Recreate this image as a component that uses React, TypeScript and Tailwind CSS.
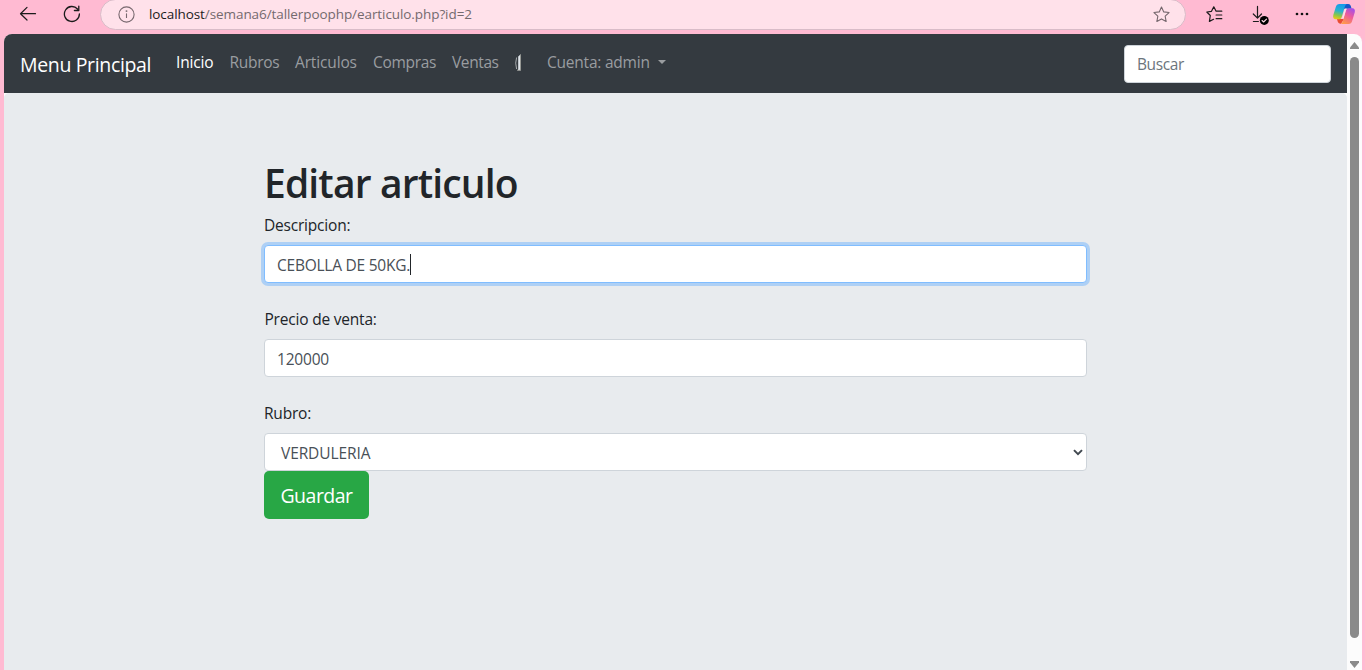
import React from 'react';

const navLinks = [
  { label: 'Rubros', cls: 'w-[65.5px] tracking-[-0.28px]' },
  { label: 'Articulos', cls: 'w-[78px] tracking-[-0.14px]' },
  { label: 'Compras', cls: 'w-[79px] tracking-[-0.32px]' },
  { label: 'Ventas', cls: 'w-[63px] tracking-[-0.4px]' },
];

function BrowserBar() {
  return (
    <header className="flex h-[34px] shrink-0 items-start bg-[#ffbad2] text-[#1b1b1b]">
      <svg className="ml-[19px] mt-[5px] h-[18px] w-[18px]" viewBox="0 0 18 18" fill="none" stroke="currentColor" strokeWidth="1.2" strokeLinecap="round" strokeLinejoin="round">
        <path d="M16.5 8.7H1.7M8 2.4 1.5 8.7 8 15" />
      </svg>
      <svg className="ml-[26px] mt-[5px] h-[18px] w-[18px]" viewBox="0 0 18 18" fill="none" stroke="currentColor" strokeWidth="1.3" strokeLinecap="round" strokeLinejoin="round">
        <path d="M16.4 9a7.5 7.5 0 1 1-1.9-5M15.8 1.2v4.3h-4.4" />
      </svg>
      <div className="-mt-px ml-[19px] flex h-[31px] w-[1086px] items-center rounded-full border border-[#d9bcc8] bg-[#ffe1ea]">
        <svg className="-mt-px ml-[16.5px] h-[17px] w-[17px] text-[#77686e]" viewBox="0 0 17 17" fill="none" stroke="currentColor" strokeWidth="1.1">
          <circle cx="8.5" cy="8.5" r="7.6" />
          <path d="M8.5 7.4v4.6" />
          <circle cx="8.5" cy="5.1" r=".4" />
        </svg>
        <div className="ml-[14.5px] whitespace-nowrap font-['Open_Sans'] text-[13.5px] tracking-[-0.08px] text-[#746a6e]">
          <span className="text-[#1b1b1b]">localhost</span>/semana6/tallerpoophp/earticulo.php?id=2
        </div>
        <svg className="ml-auto mr-[15px] h-[17px] w-[17px] text-[#75676d]" viewBox="0 0 17 17" fill="none" stroke="currentColor" strokeWidth="1.1" strokeLinejoin="round">
          <path d="m8.5 1 2.25 4.9 5.3.65-3.9 3.65 1 5.3-4.65-2.6-4.65 2.6 1-5.3L.95 6.55l5.3-.65Z" />
        </svg>
      </div>
      <svg className="ml-[20px] mt-[6px] h-[17px] w-[17px]" viewBox="0 0 17 17" fill="none" stroke="currentColor" strokeWidth="1.2" strokeLinecap="round" strokeLinejoin="round">
        <path d="M10.1 5.2 7.8.8 5.5 5.3.8 6l3.5 3.5-.9 5.9 4.2-2.1M10.1 5.2h5.7M10.1 9h5.7M10.1 12.7h5.7" />
      </svg>
      <svg className="ml-[29px] mt-[5px] h-5 w-[18px]" viewBox="0 0 18 20" fill="none" stroke="currentColor" strokeWidth="1.2" strokeLinecap="round" strokeLinejoin="round">
        <path d="M5.5 1.4v11.4M1.3 9l4.2 4.2L9.5 9M1.4 16.5h5" />
        <circle cx="12.3" cy="15.4" r="4.5" fill="#000" stroke="none" />
        <path d="m10.1 15.5 1.5 1.5 2.9-2.9" stroke="#ffdce7" strokeWidth="1.1" />
      </svg>
      <svg className="ml-[24px] mt-[12px] h-1 w-4" viewBox="0 0 16 4" fill="#111">
        <circle cx="3" cy="2" r="1.35" /><circle cx="8" cy="2" r="1.35" /><circle cx="13" cy="2" r="1.35" />
      </svg>
      <svg className="ml-[22px] mt-[3px] h-[22px] w-6" viewBox="0 0 24 22">
        <defs>
          <linearGradient id="cool" x1=".4" y1="0" x2=".2" y2="1">
            <stop stopColor="#169bea" /><stop offset=".42" stopColor="#29b3cf" /><stop offset=".72" stopColor="#8ac64b" /><stop offset="1" stopColor="#f3ca13" />
          </linearGradient>
          <linearGradient id="warm" x1=".8" y1="0" x2=".25" y2="1">
            <stop stopColor="#a34eea" /><stop offset=".45" stopColor="#ee5a9c" /><stop offset="1" stopColor="#ff9b48" />
          </linearGradient>
        </defs>
        <path d="M11 1h5.3c1.3 0 2 .7 2.5 2l.8 2.8h-8Z" fill="#1857c8" />
        <path d="M5 16h7l-3 4.8c-1.9.2-2.9-.9-3.3-2.2Z" fill="#e94c32" />
        <path d="M7.5 1h7.2c-1.3.8-1.7 2-2.2 3.7l-2.6 8.7c-.6 2-1.3 2.9-3.6 2.9H4c-2.3 0-3.4-1.7-2.7-4.3L3.8 4.1C4.4 2 5.4 1 7.5 1Z" fill="url(#cool)" />
        <path d="M16.5 20.9H8.7c1.2-.7 1.8-1.7 2.3-3.5l2.7-9.1c.6-2 1.5-3 3.8-3h2.8c2.1 0 3.1 1.7 2.4 4.1l-2.5 8.4c-.7 2.2-1.6 3.1-3.7 3.1Z" fill="url(#warm)" />
        <path d="m12.7 6.3-2.6 9.2h1.4l2.4-8.2c.2-.7.5-1.3.9-1.7h-1.2c-.4 0-.7.2-.9.7Z" fill="#ffe1ea" />
      </svg>
    </header>
  );
}

function NavBar() {
  return (
    <nav className="flex h-[59px] shrink-0 items-start bg-[#343a40] pl-4 pr-4">
      <a className="mt-[16px] w-[156px] whitespace-nowrap text-[19.5px] leading-[30px] tracking-[-0.35px] text-white">Menu Principal</a>
      <div className="mt-[16px] flex whitespace-nowrap leading-6 text-[#9a9da0]">
        <a className="w-[53.5px] tracking-[-0.15px] text-white">Inicio</a>
        {navLinks.map((l) => (
          <a key={l.label} className={l.cls}>{l.label}</a>
        ))}
        <svg className="mt-[4px] h-[17px] w-[7px]" viewBox="0 0 7 17">
          <path d="M1.6 3.5Q-.2 9 1.6 15" fill="none" stroke="#a6aaad" strokeWidth="1" />
          <path d="M5.7.3v16.2H2.2l1-1.3V2.4Z" fill="#e0e5ea" />
          <path d="M5.5.3v16M2 16.3h3.7" stroke="#91928c" strokeWidth=".8" />
        </svg>
        <a className="ml-[25px] flex items-center">
          <span className="w-[110.5px] tracking-[-0.22px]">Cuenta: admin</span>
          <svg className="h-1 w-2" viewBox="0 0 8 4" fill="currentColor"><path d="M0 0h8L4 4Z" /></svg>
        </a>
      </div>
      <input
        type="text"
        placeholder="Buscar"
        className="ml-auto mt-[11px] h-[38px] w-[207px] rounded-[4px] border border-[#ced4da] bg-white px-3 tracking-[-0.4px] outline-none placeholder:text-[#6c757d]"
      />
    </nav>
  );
}

export default function App() {
  return (
    <div className="flex h-[670px] w-[1365px] flex-col overflow-hidden bg-[#ffbad2]">
      <BrowserBar />
      <div className="ml-1 mr-[3px] flex min-h-0 flex-1 overflow-hidden rounded-t-[8px] bg-[#fcfcfc] font-['Open_Sans',sans-serif] text-[15.5px] text-[#212529]">
        <div className="flex w-[1343px] flex-col">
          <NavBar />
          <main className="flex-1 rounded-t-[5px] bg-[#e8ebee] pl-[260px] pt-[66px]">
            <form className="flex w-[823px] flex-col" onSubmit={(e) => e.preventDefault()}>
              <h1 className="h-[54px] whitespace-nowrap text-[39px] font-semibold leading-[48px] tracking-[-0.85px]">Editar articulo</h1>
              <label className="h-[32px] leading-6 tracking-[-0.2px]">Descripcion:</label>
              <div className="flex h-[38px] items-center rounded-[4px] border border-[#80bdff] bg-white px-3 pt-[2px] text-[#495057] ring-[3px] ring-[#aed0f5]">
                <span className="pt-[2px] tracking-[-0.24px]">CEBOLLA DE 50KG.</span>
                <span className="-mt-0.5 h-[21px] w-px bg-[#212529]" />
              </div>
              <label className="mt-[24px] h-[32px] pl-[0.5px] leading-6 tracking-[-0.2px]">Precio de venta:</label>
              <div className="flex h-[38px] items-center rounded-[4px] border border-[#ced4da] bg-white px-3 pt-[2px] text-[#495057]">
                <span className="pt-[2px] tracking-[-0.2px]">120000</span>
              </div>
              <label className="mt-[24px] h-[32px] leading-6 tracking-[-0.2px]">Rubro:</label>
              <div className="flex h-[38px] items-center justify-between rounded-[4px] border border-[#ced4da] bg-white pl-4 pr-[3px] text-[#495057]">
                <span className="pt-[4px] tracking-[-0.1px]">VERDULERIA</span>
                <svg className="h-[7px] w-[10px]" viewBox="0 0 10 7" fill="none" stroke="#414850" strokeWidth="2"><path d="m1 1.1 4 4 4-4" /></svg>
              </div>
              <button className="h-12 w-[105px] rounded-[5px] bg-[#28a745] pt-[2px] text-[19.5px] tracking-[-0.5px] text-white">Guardar</button>
            </form>
          </main>
        </div>
        <div className="flex w-[15px] flex-col items-center">
          <svg className="mt-[8px] h-[7px] w-[9px]" viewBox="0 0 9 7" fill="#8a8a8a"><path d="M4.5 0 9 5.6V7H0V5.6Z" /></svg>
          <div className="mt-[8px] h-[581px] w-[9px] rounded-full bg-[#8a8a8a]" />
          <svg className="mt-[23px] h-[7px] w-[9px]" viewBox="0 0 9 7" fill="#8a8a8a"><path d="M4.5 7 9 1.4V0H0v1.4Z" /></svg>
        </div>
      </div>
    </div>
  );
}
